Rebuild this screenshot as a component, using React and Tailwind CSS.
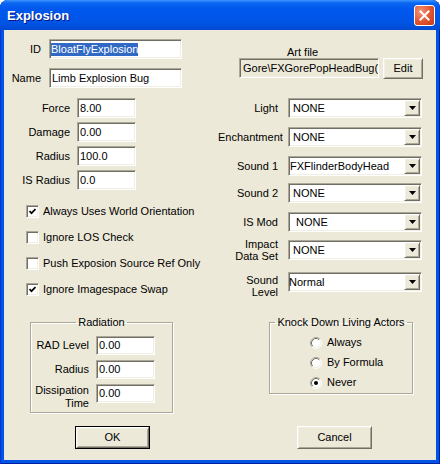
import React from "react";

const sunken =
  "border border-t-[#ACA899] border-l-[#ACA899] border-b-white border-r-white shadow-[inset_1px_1px_0_#716F64,inset_-1px_-1px_0_#F1EFE2]";
const raised =
  "border border-t-white border-l-white border-b-[#716F64] border-r-[#716F64] shadow-[inset_1px_1px_0_#F1EFE2,inset_-1px_-1px_0_#ACA899] bg-[#ECE9D8]";

function Edit({ value, size, pad = "pl-[2px]", bg = "bg-white" }) {
  return (
    <div className={`${sunken} ${bg} ${size} ${pad} flex items-center overflow-hidden whitespace-nowrap shrink-0`}>
      {value}
    </div>
  );
}

function Combo({ value, pad }) {
  return (
    <div className={`${sunken} bg-white w-[134px] h-[20px] ml-[10px] flex items-center shrink-0`}>
      <span className={`flex-1 ${pad} whitespace-nowrap overflow-hidden`}>{value}</span>
      <div className={`${raised} w-[16px] h-[16px] mr-[1px] flex items-center justify-center`}>
        <svg width="7" height="4" viewBox="0 0 7 4">
          <polygon points="0,0 7,0 3.5,4" fill="#000" />
        </svg>
      </div>
    </div>
  );
}

function Check({ checked, label, mt }) {
  return (
    <div className={`flex items-center h-[13px] pl-[22px] ${mt}`}>
      <div className={`${sunken} bg-white w-[13px] h-[13px] flex items-center justify-center shrink-0`}>
        {checked && (
          <svg width="7" height="7" viewBox="0 0 7 7">
            <polyline points="0.5,3 2.5,5.2 6.5,1" fill="none" stroke="#000" strokeWidth="1.7" />
          </svg>
        )}
      </div>
      <span className="ml-[4px] whitespace-nowrap">{label}</span>
    </div>
  );
}

function Radio({ checked, label, mt }) {
  return (
    <div className={`flex items-center h-[13px] ml-[40px] ${mt}`}>
      <svg width="12" height="12" viewBox="0 0 12 12" className="shrink-0">
        <circle cx="6" cy="6" r="5" fill="#fff" />
        <path d="M2.11 9.89 A5.5 5.5 0 0 1 9.89 2.11" fill="none" stroke="#ACA899" />
        <path d="M9.89 2.11 A5.5 5.5 0 0 1 2.11 9.89" fill="none" stroke="#fff" />
        <path d="M2.82 9.18 A4.5 4.5 0 0 1 9.18 2.82" fill="none" stroke="#716F64" />
        <path d="M9.18 2.82 A4.5 4.5 0 0 1 2.82 9.18" fill="none" stroke="#F1EFE2" />
        {checked && <circle cx="6" cy="6" r="2" fill="#000" />}
      </svg>
      <span className="ml-[5px] whitespace-nowrap">{label}</span>
    </div>
  );
}

const groupBox =
  "border border-[#ACA899] shadow-[inset_1px_1px_0_#fff,1px_1px_0_#fff] box-border";

export default function App() {
  return (
    <div className="w-[440px] h-[464px] flex flex-col bg-[#0054E3] rounded-t-[8px] shadow-[inset_1px_0_0_#0831D9,inset_-1px_0_0_#001EA0,inset_0_-1px_0_#001EA0] font-['Liberation_Sans',Arial,sans-serif] text-[11px] leading-[13px] text-black">
      {/* title bar */}
      <div className="h-[30px] flex items-center justify-between pl-[7px] pr-[5px] rounded-t-[8px] bg-[linear-gradient(to_bottom,#3D95FF_0%,#0A66F0_10%,#0058EE_30%,#0055E5_75%,#0049D0_100%)]">
        <span className="text-white font-bold text-[13px] [text-shadow:1px_1px_0_#0A1883]">Explosion</span>
        <div className="w-[21px] h-[21px] rounded-[3px] border border-white flex items-center justify-center bg-[radial-gradient(circle_at_30%_30%,#F29577_0%,#E0532F_55%,#C23B14_100%)]">
          <svg width="11" height="11" viewBox="0 0 11 11">
            <path d="M1.5 1.5 L9.5 9.5 M9.5 1.5 L1.5 9.5" stroke="#fff" strokeWidth="2" strokeLinecap="square" />
          </svg>
        </div>
      </div>

      {/* client area */}
      <div className="flex-1 mx-[4px] mb-[4px] bg-[#ECE9D8] flex flex-col">
        <div className="flex-1 flex">
          {/* left column */}
          <div className="w-[214px] flex flex-col">
            <div className="flex items-center mt-[9px]">
              <span className="w-[37px] text-right">ID</span>
              <Edit
                size="w-[133px] h-[20px] ml-[8px]"
                pad="pl-[1px]"
                value={<span className="bg-[#316AC5] text-white">BloatFlyExplosion</span>}
              />
            </div>
            <div className="flex items-center mt-[9px]">
              <span className="w-[37px] text-right">Name</span>
              <Edit size="w-[133px] h-[20px] ml-[8px]" value="Limb Explosion Bug" />
            </div>

            <div className="flex items-center mt-[10px]">
              <span className="w-[66px] text-right">Force</span>
              <Edit size="w-[59px] h-[20px] ml-[7px]" value="8.00" />
            </div>
            <div className="flex items-center mt-[4px]">
              <span className="w-[66px] text-right">Damage</span>
              <Edit size="w-[59px] h-[20px] ml-[7px]" value="0.00" />
            </div>
            <div className="flex items-center mt-[4px]">
              <span className="w-[66px] text-right">Radius</span>
              <Edit size="w-[59px] h-[20px] ml-[7px]" value="100.0" />
            </div>
            <div className="flex items-center mt-[4px]">
              <span className="w-[66px] text-right">IS Radius</span>
              <Edit size="w-[59px] h-[20px] ml-[7px]" value="0.0" />
            </div>

            <Check checked label="Always Uses World Orientation" mt="mt-[15px]" />
            <Check label="Ignore LOS Check" mt="mt-[13px]" />
            <Check label="Push Exposion Source Ref Only" mt="mt-[13px]" />
            <Check checked label="Ignore Imagespace Swap" mt="mt-[13px]" />

            <fieldset className={`${groupBox} mt-[20px] ml-[26px] w-[143px] h-[97px]`}>
              <legend className="mx-auto px-[2px] leading-[13px]">Radiation</legend>
              <div className="flex items-center mt-[7px]">
                <span className="w-[58px] text-right whitespace-nowrap">RAD Level</span>
                <Edit size="w-[59px] h-[19px] ml-[7px]" value="0.00" />
              </div>
              <div className="flex items-center mt-[5px]">
                <span className="w-[58px] text-right">Radius</span>
                <Edit size="w-[59px] h-[19px] ml-[7px]" value="0.00" />
              </div>
              <div className="flex items-start mt-[5px]">
                <span className="w-[58px] text-right">
                  Dissipation
                  <br />
                  Time
                </span>
                <Edit size="w-[59px] h-[19px] ml-[7px]" value="0.00" />
              </div>
            </fieldset>
          </div>

          {/* right column */}
          <div className="flex-1 flex flex-col">
            <div className="mt-[16px] leading-[12px] pl-[69px]">Art file</div>
            <div className="flex items-start ml-[21px]">
              <Edit size="w-[140px] h-[20px]" pad="pl-[3px]" bg="bg-[#ECE9D8]" value="Gore\FXGorePopHeadBug(" />
              <div className={`${raised} ml-[4px] w-[40px] h-[21px] flex items-center justify-center`}>Edit</div>
            </div>

            <div className="flex items-center mt-[19px]">
              <span className="w-[60px] text-right">Light</span>
              <Combo value="NONE" pad="pl-[4px]" />
            </div>
            <div className="flex items-center mt-[9px]">
              <span className="w-[60px] text-right whitespace-nowrap">Enchantment</span>
              <Combo value="NONE" pad="pl-[4px]" />
            </div>
            <div className="flex items-center mt-[9px]">
              <span className="w-[60px] text-right">Sound 1</span>
              <Combo value="FXFlinderBodyHead" pad="pl-[1px]" />
            </div>
            <div className="flex items-center mt-[7px]">
              <span className="w-[60px] text-right">Sound 2</span>
              <Combo value="NONE" pad="pl-[4px]" />
            </div>
            <div className="flex items-center mt-[9px]">
              <span className="w-[60px] text-right">IS Mod</span>
              <Combo value="NONE" pad="pl-[7px]" />
            </div>
            <div className="flex items-center mt-[6px]">
              <span className="w-[60px] text-right leading-[12px]">
                Impact
                <br />
                Data Set
              </span>
              <Combo value="NONE" pad="pl-[4px]" />
            </div>
            <div className="flex items-start mt-[10px]">
              <span className="w-[60px] text-right leading-[12px] mt-[2px]">
                Sound
                <br />
                Level
              </span>
              <Combo value="Normal" pad="pl-0" />
            </div>

            <fieldset className={`${groupBox} mt-[18px] ml-[51px] w-[144px] h-[78px]`}>
              <legend className="mx-auto px-[2px] leading-[13px] whitespace-nowrap">Knock Down Living Actors</legend>
              <Radio label="Always" mt="mt-[7px]" />
              <Radio label="By Formula" mt="mt-[7px]" />
              <Radio checked label="Never" mt="mt-[7px]" />
            </fieldset>
          </div>
        </div>

        {/* buttons */}
        <div className="flex h-[23px] mb-[11px]">
          <div className="ml-[71px] w-[75px] h-[23px] border border-black flex">
            <div className={`${raised} flex-1 flex items-center justify-center`}>OK</div>
          </div>
          <div className={`${raised} ml-[147px] w-[75px] h-[23px] flex items-center justify-center`}>Cancel</div>
        </div>
      </div>
    </div>
  );
}
